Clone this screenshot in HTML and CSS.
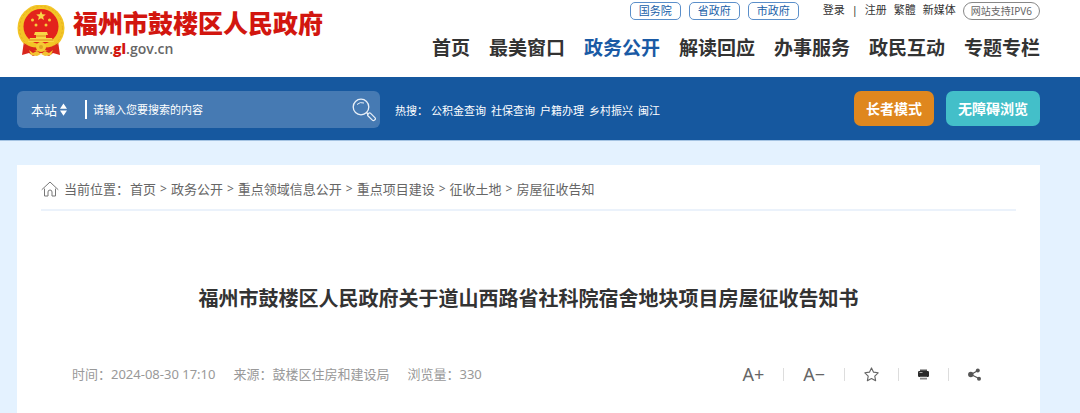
FILE: index.html
```html
<!DOCTYPE html>
<html lang="zh-CN">
<head>
<meta charset="utf-8">
<meta name="viewport" content="width=device-width, initial-scale=1">
<title>福州市鼓楼区人民政府</title>
<link rel="stylesheet" href="styles.css">
</head>
<body>
<header class="header wrap">
  <a class="brand" href="#">
    <svg class="emblem" viewBox="0 0 48 52" aria-hidden="true">
      <path d="M7 36 L5 50 L12 48 L16 51 L24 48 L32 51 L36 48 L43 50 L41 36Z" fill="#d9261c"/>
      <circle cx="24" cy="23" r="23.5" fill="#f3c526"/>
      <circle cx="24" cy="23" r="21.5" fill="none" stroke="#e6b120" stroke-width="1" stroke-dasharray="2 2"/>
      <circle cx="24" cy="21.500" r="17.500" fill="#e3231c"/>
      <path d="M24 6l1.300 3.300 3.500.2-2.700 2.200.9 3.400-3-1.900-3 1.900.9-3.400-2.700-2.200 3.500-.2z" fill="#f8d848"/>
      <g fill="#f5cd3c"><circle cx="15.500" cy="15" r="1.500"/><circle cx="32.500" cy="15" r="1.500"/><circle cx="19" cy="20" r="1.500"/><circle cx="29" cy="20" r="1.500"/></g>
      <path d="M18 27h12l1 3h-2v3h6l2 4H11l2-4h6v-3h-2z" fill="#f8d747"/>
      <path d="M19 31h10M12 35h24" stroke="#dc8c1b"/>
      <path d="M7 38q8 6 17 4q9 2 17-4l-2 6q-7 3-11 1l-4 2-4-2q-4 2-11-1z" fill="#da291c"/>
      <circle cx="24" cy="42" r="5" fill="#f5cb34"/><circle cx="24" cy="42" r="2" fill="#dea324"/>
      <path d="M12 45l4 3 4-2 4 3 4-3 4 2 4-3-2 5-6 1-4-2-4 2-6-1z" fill="#f3c331"/>
    </svg>
    <span class="brand-text">
      <span class="brand-name">福州市鼓楼区人民政府</span>
      <span class="brand-url">www.<b>gl</b>.gov.cn</span>
    </span>
  </a>
  <div class="header-side">
    <div class="topbar">
      <div class="portals">
        <a class="pill" href="#">国务院</a>
        <a class="pill" href="#">省政府</a>
        <a class="pill" href="#">市政府</a>
      </div>
      <div class="account">
        <a href="#">登录</a><span>|</span><a href="#">注册</a><a href="#">繁體</a><a href="#">新媒体</a>
        <a class="ipv6" href="#">网站支持IPV6</a>
      </div>
    </div>
    <nav class="nav">
      <a href="#">首页</a>
      <a href="#">最美窗口</a>
      <a class="active" href="#">政务公开</a>
      <a href="#">解读回应</a>
      <a href="#">办事服务</a>
      <a href="#">政民互动</a>
      <a href="#">专题专栏</a>
    </nav>
  </div>
</header>

<div class="band">
  <div class="band-inner wrap">
    <form class="search">
      <label class="scope">
        <select class="scope-select" aria-label="搜索范围"><option>本站</option></select>
        <svg class="scope-arrows" viewBox="0 0 8 14" aria-hidden="true"><path d="M4 0l4 6H0zM4 14l4-6H0z" fill="#fff"/></svg>
      </label>
      <input class="search-input" type="text" aria-label="搜索内容" placeholder="请输入您要搜索的内容">
      <button class="search-button" type="button" aria-label="搜索">
        <svg viewBox="0 0 24 24" fill="none" stroke="#e9f0f8" aria-hidden="true">
          <circle cx="9" cy="9" r="7.800" stroke-width="1.300"/>
          <path d="M5 6.500q3-3 7-1.500" stroke-width="1"/>
          <path d="M14.500 14.500l2 2" stroke-width="1.500"/>
          <rect x="15" y="17" width="9" height="3.600" rx="1.500" transform="rotate(45 19.500 18.800)" stroke-width="1.200"/>
        </svg>
      </button>
    </form>
    <div class="hot">
      <span class="hot-label">热搜：</span>
      <a href="#">公积金查询</a>
      <a href="#">社保查询</a>
      <a href="#">户籍办理</a>
      <a href="#">乡村振兴</a>
      <a href="#">闽江</a>
    </div>
    <div class="modes">
      <button class="mode mode-elder" type="button">长者模式</button>
      <button class="mode mode-access" type="button">无障碍浏览</button>
    </div>
  </div>
</div>

<main class="main wrap">
  <article class="panel">
    <nav class="crumbs" aria-label="当前位置">
      <svg class="home" viewBox="0 0 18 16" fill="none" stroke="#777" stroke-linejoin="round" stroke-linecap="round" aria-hidden="true">
        <path d="M1 8.500L9 1l8 7.500M3.500 8v7H7v-4q0-2 2-2t2 2v4h3.500V8"/>
      </svg>
      <span class="crumbs-label">当前位置：</span>
      <a href="#">首页</a><i>&gt;</i>
      <a href="#">政务公开</a><i>&gt;</i>
      <a href="#">重点领域信息公开</a><i>&gt;</i>
      <a href="#">重点项目建设</a><i>&gt;</i>
      <a href="#">征收土地</a><i>&gt;</i>
      <a href="#">房屋征收告知</a>
    </nav>
    <h1 class="title">福州市鼓楼区人民政府关于道山西路省社科院宿舍地块项目房屋征收告知书</h1>
    <div class="meta">
      <div class="facts">
        <span>时间：2024-08-30 17:10</span>
        <span>来源：鼓楼区住房和建设局</span>
        <span>浏览量：330</span>
      </div>
      <div class="tools">
        <button class="tool" type="button" aria-label="放大字号">A+</button>
        <button class="tool" type="button" aria-label="缩小字号">A−</button>
        <button class="tool" type="button" aria-label="收藏">
          <svg width="15" height="15" viewBox="0 0 16 16" fill="none" stroke="#666" stroke-width="1.200" stroke-linejoin="round"><path d="M8 1l2.200 4.500 4.900.7-3.600 3.500.9 4.900L8 12.300l-4.400 2.300.9-4.900L.9 6.200l4.900-.7z"/></svg>
        </button>
        <button class="tool" type="button" aria-label="打印">
          <svg width="11" height="11" viewBox="0 0 11 11"><path d="M2 .5h7V3H2z" fill="#555"/><rect y="2" width="11" height="6" rx="1.200" fill="#2b2b2b"/><path d="M1.500 3.500h3" stroke="#aaa"/><path d="M2 7.500h7v3H2z" fill="#888"/><path d="M2 8.500h7" stroke="#ddd"/></svg>
        </button>
        <button class="tool" type="button" aria-label="分享">
          <svg width="13" height="13" viewBox="0 0 13 13" fill="#555"><path d="M10 2.500L3 6.500l8 4" fill="none" stroke="#555" stroke-width="1.200"/><circle cx="2.800" cy="6.500" r="2.700"/><circle cx="9.800" cy="2.500" r="2"/><circle cx="11" cy="10.700" r="2"/></svg>
        </button>
      </div>
    </div>
  </article>
</main>
</body>
</html>
```
FILE: styles.css
```css
* {
  box-sizing: border-box;
}

body {
  margin: 0;
  background: #e4f2ff;
  color: #333;
  font: 13px/20px "Noto Sans", "Noto Sans CJK SC", sans-serif;
}

a {
  color: inherit;
  text-decoration: none;
}

button,
input,
select {
  font: inherit;
  color: inherit;
  margin: 0;
  padding: 0;
  border: 0;
  background: none;
}

svg {
  display: block;
}

.wrap {
  padding-left: 17px;
  padding-right: 40px;
}

.header {
  display: flex;
  justify-content: space-between;
  min-height: 77px;
  background: #fff;
}

.brand {
  display: flex;
  gap: 8px;
  padding-top: 5px;
}

.emblem {
  width: 48px;
  height: 52px;
}

.brand-text {
  display: flex;
  flex-direction: column;
  padding-top: 4px;
}

.brand-name {
  font: 900 25px/30px "Liberation Sans", "Noto Sans CJK SC", sans-serif;
  color: #d2160f;
}

.brand-url {
  padding-left: 2px;
  font: 600 14px/20px "Open Sans", sans-serif;
  color: #666;
}

.brand-url b {
  color: #d2160f;
}

.header-side {
  display: flex;
  flex-direction: column;
  align-items: flex-end;
  gap: 14px;
  padding-top: 2px;
}

.topbar {
  display: flex;
  gap: 24px;
  font-size: 11px;
  line-height: 16px;
}

.portals {
  display: flex;
  gap: 8px;
}

.pill {
  padding: 0 8px;
  border: 1px solid #5b8fca;
  border-radius: 5px;
  color: #2060a8;
}

.account {
  display: flex;
  gap: 7px;
}

.ipv6 {
  padding: 0 7px;
  border: 1px solid #888;
  border-radius: 9px;
  font-size: 10px;
  color: #666;
}

.nav {
  display: flex;
  gap: 19px;
  font-size: 19px;
  line-height: 28px;
  font-weight: 700;
}

.nav .active {
  color: #1a5aa5;
}

.band {
  background: #16589f;
  border-bottom: 1px solid #a5c4e3;
  color: #fff;
}

.band-inner {
  display: flex;
  align-items: flex-start;
  padding-top: 14px;
  padding-bottom: 12px;
  font-size: 11px;
}

.search {
  display: flex;
  align-items: center;
  flex: 0 1 363px;
  height: 37px;
  padding: 0 4px 0 14px;
  border-radius: 6px;
  background: #467ab3;
}

.scope {
  display: flex;
  align-items: center;
  gap: 3px;
  width: 54px;
}

.scope-select {
  appearance: none;
  width: 26px;
  font-size: 13px;
}

.scope-arrows {
  width: 7px;
  height: 13px;
}

.search-input {
  flex: 1;
  min-width: 0;
  height: 19px;
  padding-left: 6px;
  border-left: 2px solid #fff;
}

.search-input::placeholder {
  color: #fff;
  opacity: 1;
}

.search-button svg {
  width: 24px;
  height: 24px;
}

.hot {
  display: flex;
  gap: 5px;
  padding: 10px 0 0 15px;
}

.hot-label {
  margin-right: -2px;
}

.modes {
  display: flex;
  gap: 12px;
  margin-left: auto;
}

.mode {
  height: 35px;
  padding: 0 12px;
  border-radius: 7px;
  font-size: 14px;
  font-weight: 700;
}

.mode-elder {
  background: #df871e;
}

.mode-access {
  background: #43bfc9;
}

.main {
  padding-top: 24px;
}

.panel {
  min-height: 248px;
  padding: 14px 24px 24px;
  background: #fff;
}

.crumbs {
  display: flex;
  align-items: center;
  padding-bottom: 10px;
  border-bottom: 2px solid #ebf2fb;
  color: #666;
}

.home {
  width: 18px;
  height: 16px;
  margin-right: 5px;
}

.crumbs-label {
  margin-right: 1px;
}

.crumbs i {
  margin: 0 4px;
  font-size: 12px;
  font-style: normal;
}

.title {
  margin: 73px 0 50px;
  font-size: 20px;
  line-height: 30px;
  text-align: center;
}

.meta {
  display: flex;
  justify-content: space-between;
  align-items: center;
  padding: 0 16px 0 31px;
  color: #999;
}

.facts {
  display: flex;
  gap: 18px;
}

.tools {
  display: flex;
  align-items: center;
}

.tool {
  display: flex;
  align-items: center;
  height: 13px;
  padding: 0 19px;
  font-size: 18px;
  color: #666;
}

.tool + .tool {
  border-left: 1px solid #ddd;
}
```
